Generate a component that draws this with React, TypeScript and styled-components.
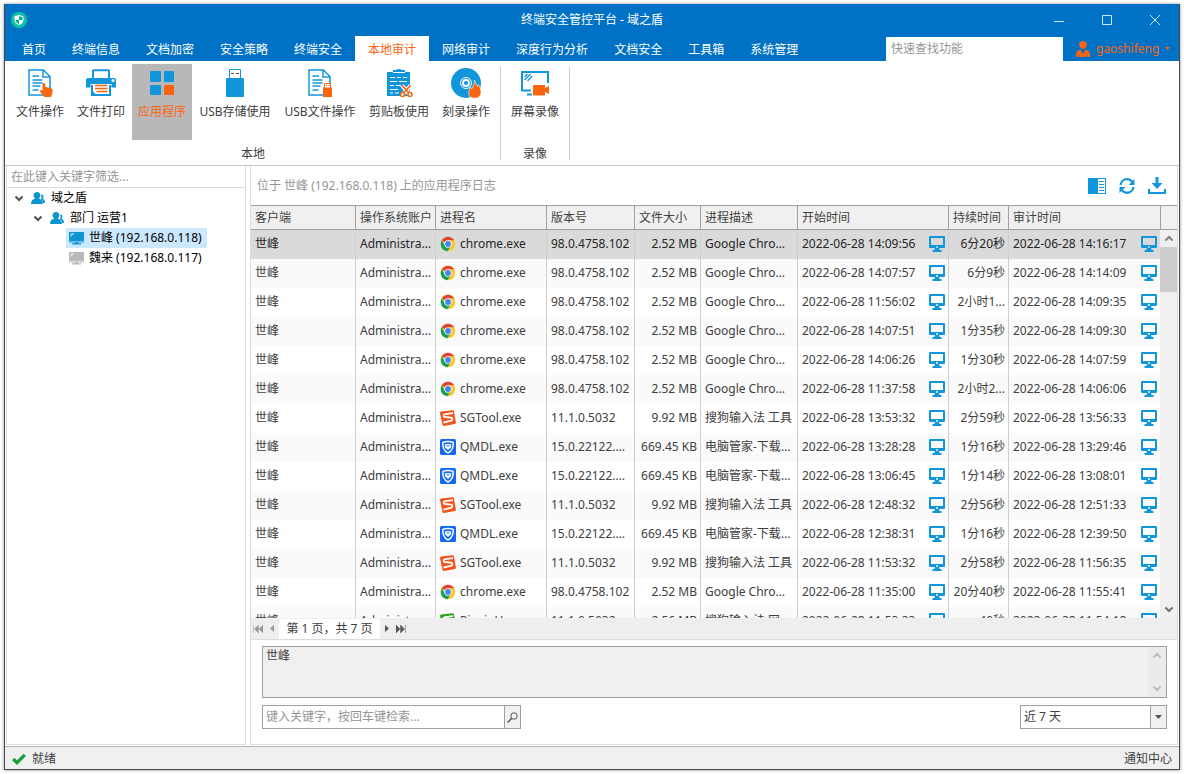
import React from "react";
import styled, { createGlobalStyle } from "styled-components";

const c = {
  brand: "#0072c6",
  icon: "#1296db",
  accent: "#f9650f",
  text: "#404040",
  line: "#a0a0a0",
  soft: "#dcdcdc",
  panel: "#f0f0f0",
};

const GlobalStyle = createGlobalStyle`
  * { box-sizing: border-box; }
  body { margin: 0; background: #fff; }
  body, button, input, textarea, select {
    font: 12px/16px "Noto Sans", "Noto Sans CJK SC", sans-serif;
    color: ${c.text};
  }
  button { border: 0; background: none; padding: 0; }
  svg { display: block; flex: none; }
`;

const Frame = styled.div`
  height: 100vh;
  padding: 4px;
`;
const Window = styled.div`
  height: 100%;
  display: flex;
  flex-direction: column;
  border: solid #4a4a4a;
  border-width: 0 1px 1px;
  box-shadow: 0 0 3px rgba(0, 0, 0, 0.45);
  background: #fff;
`;
const TitleBar = styled.header`
  display: grid;
  grid-template-columns: 1fr auto 1fr;
  align-items: center;
  height: 32px;
  flex: none;
  background: ${c.brand};
  color: #fff;
`;
const AppLogo = styled.div`
  padding-left: 6px;
`;
const Title = styled.h1`
  margin: 0;
  font-size: 12px;
  font-weight: 400;
`;
const WindowButtons = styled.div`
  display: flex;
  justify-content: flex-end;
`;
const WindowButton = styled.button`
  width: 48px;
  height: 32px;
  display: grid;
  place-items: center;
`;
const TabBar = styled.nav`
  display: flex;
  height: 25px;
  flex: none;
  padding-left: 4px;
  background: ${c.brand};
`;
const Tab = styled.button<{ $active?: boolean }>`
  padding: 2px 13px 0;
  white-space: nowrap;
  color: ${(p) => (p.$active ? c.accent : "#fff")};
  background: ${(p) => (p.$active ? "#fff" : "transparent")};
`;
const QuickSearch = styled.input`
  width: 177px;
  margin: 1px 0 0 auto;
  padding: 0 5px;
  border: 0;
  &::placeholder { color: #969696; opacity: 1; }
`;
const UserButton = styled.button`
  display: flex;
  align-items: center;
  gap: 6px;
  width: 116px;
  padding-left: 13px;
  color: ${c.accent};
`;
const Ribbon = styled.div`
  display: flex;
  flex: none;
  height: 105px;
  padding: 3px 0 5px;
  border-bottom: 1px solid #c6c6c6;
`;
const Group = styled.section`
  display: flex;
  flex-direction: column;
  align-items: center;
  gap: 6px;
  padding: 0 5px 0 4px;
  position: relative;
  &::after {
    content: "";
    position: absolute;
    right: 0;
    top: 3px;
    bottom: 0;
    width: 1px;
    background: #cfcfcf;
  }
  &:first-child { padding-left: 5px; }
`;
const GroupItems = styled.div`
  display: flex;
  gap: 1px;
`;
const RibbonButton = styled.button<{ $active?: boolean; $wide?: boolean }>`
  display: flex;
  flex-direction: column;
  align-items: center;
  gap: 6px;
  height: 76px;
  min-width: ${(p) => (p.$wide ? 84 : 60)}px;
  padding: 4px 6px;
  white-space: nowrap;
  color: ${(p) => (p.$active ? c.accent : c.text)};
  background: ${(p) => (p.$active ? "#b8b8b8" : "transparent")};
`;
const Body = styled.div`
  flex: 1;
  min-height: 0;
  display: flex;
  gap: 4px;
  padding: 0 1px 1px;
`;
const Sidebar = styled.aside`
  width: 240px;
  flex: none;
  border: solid ${c.soft};
  border-width: 0 1px 1px;
`;
const TreeFilter = styled.input`
  display: block;
  width: 100%;
  height: 22px;
  padding: 0 4px;
  border: 0;
  border-bottom: 1px solid ${c.soft};
  &::placeholder { color: #969696; opacity: 1; }
`;
const Tree = styled.ul`
  margin: 0;
  padding: 0;
  list-style: none;
`;
const TreeRow = styled.li<{ $level: number }>`
  display: flex;
  align-items: center;
  height: 20px;
  padding-left: ${(p) => 7 + p.$level * 19}px;
  color: #000;
`;
const TreeLabel = styled.span<{ $selected?: boolean }>`
  display: flex;
  align-items: center;
  gap: 5px;
  height: 20px;
  padding: 0 5px 0 3px;
  background: ${(p) => (p.$selected ? "#cce8ff" : "transparent")};
`;
const Toggle = styled.button`
  width: 10px;
  margin-right: 4px;
`;
const Main = styled.main`
  flex: 1;
  min-width: 0;
  display: flex;
  flex-direction: column;
  border: solid ${c.soft};
  border-width: 0 1px 1px;
`;
const MainHead = styled.div`
  display: flex;
  align-items: center;
  justify-content: space-between;
  height: 39px;
  flex: none;
  padding: 0 10px 0 6px;
  color: #969696;
`;
const Actions = styled.div`
  display: flex;
  gap: 10px;
`;
const IconButton = styled.button`
  width: 20px;
  height: 20px;
  display: grid;
  place-items: center;
`;
const Grid = styled.div`
  flex: 1;
  min-height: 0;
  display: flex;
  overflow: hidden;
`;
const TableClip = styled.div`
  flex: 1;
  min-width: 0;
  overflow: hidden;
`;
const Table = styled.table`
  width: 100%;
  table-layout: fixed;
  border-collapse: separate;
  border-spacing: 0;
`;
const Col = styled.col<{ $w?: number }>`
  width: ${(p) => (p.$w ? p.$w + "px" : "auto")};
`;
const Th = styled.th`
  height: 25px;
  padding: 0 3px 0 4px;
  text-align: left;
  font-weight: 400;
  white-space: nowrap;
  background: ${c.panel};
  border: solid ${c.line};
  border-width: 1px 1px 1px 0;
  &:last-child { border-right: 0; }
`;
const Tr = styled.tr<{ $selected?: boolean }>`
  color: ${(p) => (p.$selected ? "#262626" : c.text)};
  background: ${(p) => (p.$selected ? "#dadada" : "#fff")};
  &:nth-child(even) { background: #fafafa; }
`;
const Td = styled.td<{ $right?: boolean }>`
  height: 29px;
  padding: 0 3px 1px 4px;
  border-right: 1px solid #cfcfcf;
  white-space: nowrap;
  overflow: hidden;
  text-overflow: ellipsis;
  text-align: ${(p) => (p.$right ? "right" : "left")};
  &:last-child { border-right: 0; }
`;
const Cell = styled.div<{ $spread?: boolean }>`
  display: flex;
  align-items: center;
  gap: 4px;
  justify-content: ${(p) => (p.$spread ? "space-between" : "flex-start")};
`;
const Scroll = styled.div`
  width: 17px;
  flex: none;
  display: flex;
  flex-direction: column;
  background: #f0f0f0;
`;
const ScrollCap = styled.div`
  height: 25px;
  border: solid ${c.line};
  border-width: 1px 0 1px 1px;
  background: ${c.panel};
`;
const ScrollArrow = styled.button`
  height: 17px;
  display: grid;
  place-items: center;
`;
const Thumb = styled.div`
  height: 45px;
  margin-bottom: auto;
  background: #cdcdcd;
`;
const Pager = styled.div`
  display: flex;
  align-items: center;
  height: 22px;
  flex: none;
  background: #eeeeee;
  border-bottom: 1px solid ${c.soft};
`;
const PagerButton = styled.button`
  height: 20px;
  width: 14px;
  display: grid;
  place-items: center;
`;
const PageText = styled.span`
  width: 101px;
  height: 20px;
  line-height: 20px;
  text-align: center;
  background: #fff;
`;
const Detail = styled.div`
  display: flex;
  flex-direction: column;
  flex: none;
  gap: 7px;
  padding: 6px 10px 15px 11px;
`;
const DetailBox = styled.div`
  display: flex;
  height: 52px;
  border: 1px solid ${c.line};
  background: ${c.panel};
`;
const DetailText = styled.textarea`
  flex: 1;
  border: 0;
  padding: 1px 3px;
  resize: none;
  background: transparent;
  overflow: hidden;
`;
const DetailScroll = styled.div`
  width: 18px;
  display: flex;
  flex-direction: column;
  justify-content: space-between;
  background: #ebebeb;
`;
const DetailFoot = styled.div`
  display: flex;
  justify-content: space-between;
`;
const Field = styled.div<{ $w: number }>`
  display: flex;
  position: relative;
  width: ${(p) => p.$w}px;
  height: 24px;
  border: 1px solid ${c.line};
`;
const FieldInput = styled.input`
  flex: 1;
  min-width: 0;
  border: 0;
  padding: 0 3px;
  &::placeholder { color: #969696; opacity: 1; }
`;
const FieldButton = styled.button`
  width: 16px;
  display: grid;
  place-items: center;
  background: ${c.panel};
  border-left: 1px solid ${c.line};
`;
const RangeSelect = styled.select`
  flex: 1;
  appearance: none;
  border: 0;
  padding: 0 3px;
  background: #fff;
`;
const SelectArrow = styled.span`
  position: absolute;
  right: 0;
  top: 0;
  bottom: 0;
  width: 16px;
  display: grid;
  place-items: center;
  pointer-events: none;
  background: ${c.panel};
  border-left: 1px solid ${c.line};
`;
const StatusBar = styled.footer`
  display: flex;
  align-items: center;
  justify-content: space-between;
  height: 23px;
  flex: none;
  padding: 1px 7px 0;
  background: ${c.panel};
  border-top: 1px solid #b4b4b4;
`;
const Status = styled.span`
  display: flex;
  align-items: center;
  gap: 6px;
`;

const Logo = () => (
  <svg width="16" height="16" viewBox="0 0 16 16">
    <circle cx="8" cy="8" r="8" fill="#08c5a3" />
    <path d="M8 3 12.500 4.300V8c0 2.600-2.300 4.300-4.500 5.200C5.800 12.300 3.500 10.600 3.500 8V4.300z" fill="#fff" />
    <path d="M8 4.200V8h3.500V5zM4.500 8H8v4.200C6.200 11.300 4.500 10 4.500 8z" fill="#08b394" />
  </svg>
);
const UserIcon = () => (
  <svg width="14" height="16" viewBox="0 0 14 16" fill={c.accent}>
    <path d="M3.200 3.500C3.200 1.200 5 0 7 0s3.800 1.200 3.800 3.500C10.800 6 9 8 7 8S3.200 6 3.200 3.500z" />
    <path d="M4.500 8.600 6.500 13 7 10l.5 3 2-4.400C12.500 9.500 14 11 14 13.500V16H11.500v-2.500h-.7V16H3.200v-2.500h-.7V16H0v-2.500C0 11 1.500 9.500 4.500 8.600z" />
  </svg>
);
const People = () => (
  <svg width="15" height="14" viewBox="0 0 15 14" fill="#0e95cf">
    <path d="M10 3.500c1.500-.3 2.500.6 2.500 2 0 .9-.4 1.500-1 2 1.500.6 2.500 2 2.500 4.500h-1.800c-.2-1.800-1-3-2.300-3.800C10.800 6.800 10.800 5 10 3.500z" />
    <path d="M6 1c2 0 3.400 1.300 3.400 3.300 0 1.400-.7 2.500-1.500 3.200 2.300.6 4 2.200 4.100 5.500H0c.1-3.300 1.800-4.900 4.100-5.500C3.300 6.800 2.600 5.700 2.600 4.300 2.600 2.300 4 1 6 1z" />
  </svg>
);
const Computer = ({ color }: { color: string }) => (
  <svg width="15" height="13" viewBox="0 0 15 13">
    <path d="M0 0h15v9H0z" fill={color} />
    <path d="M1.500 4.500 5 1.200M1.500 2.800 3 1.300" stroke="#fff" strokeWidth=".9" />
    <path d="M0 9.500h15v1H9v.8h3v1.200H3v-1.200h3v-.8H0z" fill={color} />
  </svg>
);
const Screen = () => (
  <svg width="16" height="16" viewBox="0 0 16 16" fill={c.icon}>
    <path fillRule="evenodd" d="M1 0h14a1 1 0 0 1 1 1v10a1 1 0 0 1-1 1h-4.500c-.5 0-.5 2 .5 2h1.500v2h-9v-2H5c1 0 1-2 .5-2H1a1 1 0 0 1-1-1V1a1 1 0 0 1 1-1zm1 2v7h12V2zm5 8.300v1.400h2v-1.400z" />
  </svg>
);
const Chrome = () => (
  <svg width="16" height="16" viewBox="0 0 16 16">
    <circle cx="8" cy="8" r="7.300" fill="#fbc92f" />
    <path d="M8 8 1.700 4.350A7.300 7.300 0 0 1 14.320 4.350H8z" fill="#e04434" />
    <path d="M1.700 4.350A7.300 7.300 0 0 0 7.400 15.280L11.160 9.800 8 8 4.850 9.800z" fill="#15a15b" />
    <circle cx="8" cy="8" r="3.650" fill="#fff" />
    <circle cx="8" cy="8" r="2.900" fill="#4285f4" />
  </svg>
);
const Sogou = ({ color = "#f5511e" }: { color?: string }) => (
  <svg width="16" height="16" viewBox="0 0 16 16">
    <path d="M0 3Q0 1.800 1.200 1.500L12.500.2Q13.700 0 13.900 1.200L15.900 12.500Q16 13.600 14.900 13.900L4 15.900Q2.800 16 2.500 14.900z" fill={color} />
    <path d="M13 3.200 5.200 4.200C3.200 4.500 3 6.600 4.800 7L11 7.700c2 .3 1.800 2.700-.2 3.100L3.500 12.500" fill="none" stroke="#fff" strokeWidth="1.800" />
  </svg>
);
const Shield = () => (
  <svg width="16" height="16" viewBox="0 0 16 16">
    <rect width="16" height="16" rx="1.500" fill="#1268fb" />
    <path d="M2.800 3.400Q8 1.500 13.200 3.400C13.500 8.500 12 12 8 14 4 12 2.500 8.500 2.800 3.400z" fill="none" stroke="#fff" strokeWidth="1.500" />
    <path d="M4.800 5h6.400L11 8.200l-3 2.800-3-2.800z" fill="#fff" />
    <path d="M6 5.500 8 7.500l2-2" stroke="#1268fb" fill="none" />
  </svg>
);
const Chevron = ({ up, color = "#505050" }: { up?: boolean; color?: string }) => (
  <svg width="10" height="7" viewBox="0 0 10 7">
    <path d={up ? "M1.500 5.500 5 2 8.500 5.500" : "M1.500 1.500 5 5 8.500 1.500"} fill="none" stroke={color} strokeWidth="2" />
  </svg>
);
const Doc = () => (
  <>
    <path d="M4 2h14.500L25 8.500V27H4z" fill="#fff" stroke={c.icon} strokeWidth="1.500" />
    <path d="M18 2v7h7" fill="none" stroke={c.icon} strokeWidth="1.500" />
    <path d="M7.500 8H14M7.500 12h10M7.500 15h10M7.500 18h8M7.500 22h6" stroke={c.icon} strokeWidth="1.500" />
  </>
);

const ribbonIcons: Record<string, React.ReactNode> = {
  file: (
    <>
      <Doc />
      <path d="M17.500 16.500c0-2 2.800-2 2.800 0v2.800c1-.5 2-.3 2.400.4 1-.5 2-.1 2.200.6 1-.4 2.600 0 2.600 1.500 0 2.500 0 4.500-1.500 7.200h-6.500c-1.500-2-3.500-3.500-4.500-5.500-.5-1.500 1.200-2 2.500-.8z" fill={c.accent} />
    </>
  ),
  print: (
    <>
      <path d="M7 10V3q0-.8.8-.8h14.400q.8 0 .8.8v7" fill="none" stroke={c.icon} strokeWidth="2" />
      <path d="M2 10h26q2 0 2 2v7.500h-4.500V16h-21v3.500H0V12q0-2 2-2z" fill={c.icon} />
      <circle cx="27" cy="12.500" r="1.500" fill="#fff" />
      <path d="M6 17v10h18V17" fill="#fff" stroke={c.icon} strokeWidth="2" />
      <path d="M6 22v6h5z" fill={c.icon} />
      <path d="M9 17.500h12.500M9 20.500h12.500M10.500 23.500h11" stroke={c.accent} strokeWidth="1.500" />
    </>
  ),
  apps: (
    <>
      <rect x="3" y="3" width="11" height="11" rx="1" fill={c.icon} />
      <rect x="17" y="3" width="10" height="11" rx="1" fill={c.icon} />
      <rect x="3" y="17" width="11" height="10" rx="1" fill={c.icon} />
      <rect x="17" y="17" width="10" height="10" rx="1" fill={c.accent} />
    </>
  ),
  usb: (
    <>
      <path d="M9.500 11V1.500h11V11" fill="#fff" stroke={c.icon} />
      <path d="M11 5.500h3M16 5.500h3" stroke="#555" />
      <rect x="6" y="10" width="18" height="19" rx="1" fill={c.icon} />
    </>
  ),
  usbfile: (
    <>
      <Doc />
      <path d="M19.500 20v-4.500h6V20" fill="#fff" stroke={c.accent} />
      <path d="M21 17.500h1M23.500 17.500h1" stroke={c.accent} />
      <rect x="18" y="19.500" width="9" height="9.500" fill={c.accent} />
    </>
  ),
  clipboard: (
    <>
      <path d="M3 4h6V2h3q3-2 6 0h3v2h5v24H3z" fill={c.icon} />
      <path d="M9 4.500h12" stroke="#fff" />
      <path d="M6 9.500h5M13 9.500h4M19 9.500h4M6 13.500h7M15 13.500h8M6 17.500h4M12 17.500h5M6 21.500h8M6 25h3M11 25h4" stroke="#fff" strokeWidth="1.200" />
      <path d="M18 17.500 26 27M26.500 17.500 18.500 27" stroke="#fff" strokeWidth="4" />
      <path d="M18 17.500 25 25M26.500 17.500 19.500 25" stroke={c.accent} strokeWidth="1.800" />
      <g fill="#fff" stroke={c.accent} strokeWidth="1.500">
        <circle cx="18.500" cy="26.500" r="2" />
        <circle cx="26" cy="26.500" r="2" />
      </g>
    </>
  ),
  disc: (
    <>
      <circle cx="15" cy="15" r="15" fill={c.icon} />
      <circle cx="15" cy="15" r="5.500" fill="none" stroke="#fff" />
      <circle cx="15" cy="15" r="3" fill={c.icon} stroke="#fff" strokeWidth="1.800" />
      <path d="M23.500 12c1 3 2 4 3 6.500l1-2c1.800 3 2.500 5.500 2.500 8 0 2.500-1.500 4.500-3.500 5.500h-5.500c-2.500-1-3.500-3-3.300-5.500.2-1.800 1-3.200 1.500-5.500l1.500 2c1-2.500 3-5 2.800-9z" fill={c.accent} stroke="#fff" strokeWidth=".6" />
    </>
  ),
  record: (
    <>
      <path d="M11 22.500H2V4h26v11" fill="none" stroke={c.icon} strokeWidth="2" />
      <path d="M4.500 12 10.500 6M4.500 9 7.500 6M7.500 13 12 8" stroke={c.icon} strokeWidth="1.300" />
      <path d="M7 26.500h5" stroke={c.icon} strokeWidth="2" />
      <path d="M14 17h11v3l4-2v8l-4-2v3.500H13V18z" fill={c.accent} />
    </>
  ),
};

const tabs = ["首页", "终端信息", "文档加密", "安全策略", "终端安全", "本地审计", "网络审计", "深度行为分析", "文档安全", "工具箱", "系统管理"];
const groups = [
  {
    name: "本地",
    items: [
      ["文件操作", "file"], ["文件打印", "print"], ["应用程序", "apps"], ["USB存储使用", "usb"],
      ["USB文件操作", "usbfile"], ["剪贴板使用", "clipboard"], ["刻录操作", "disc"],
    ],
  },
  { name: "录像", items: [["屏幕录像", "record"]] },
];
const programs: Record<string, [string, string, string, string, React.ReactNode]> = {
  chrome: ["chrome.exe", "98.0.4758.102", "2.52 MB", "Google Chrome Browser", <Chrome />],
  sg: ["SGTool.exe", "11.1.0.5032", "9.92 MB", "搜狗输入法 工具", <Sogou />],
  qm: ["QMDL.exe", "15.0.22122.201", "669.45 KB", "电脑管家-下载组件", <Shield />],
  pinyin: ["PinyinUp.exe", "11.1.0.5032", "2.56 MB", "搜狗输入法 网络更新", <Sogou color="#2ba51c" />],
};
const rows = [
  ["chrome", "14:09:56", "6分20秒", "14:16:17"],
  ["chrome", "14:07:57", "6分9秒", "14:14:09"],
  ["chrome", "11:56:02", "2小时1...", "14:09:35"],
  ["chrome", "14:07:51", "1分35秒", "14:09:30"],
  ["chrome", "14:06:26", "1分30秒", "14:07:59"],
  ["chrome", "11:37:58", "2小时2...", "14:06:06"],
  ["sg", "13:53:32", "2分59秒", "13:56:33"],
  ["qm", "13:28:28", "1分16秒", "13:29:46"],
  ["qm", "13:06:45", "1分14秒", "13:08:01"],
  ["sg", "12:48:32", "2分56秒", "12:51:33"],
  ["qm", "12:38:31", "1分16秒", "12:39:50"],
  ["sg", "11:53:32", "2分58秒", "11:56:35"],
  ["chrome", "11:35:00", "20分40秒", "11:55:41"],
  ["pinyin", "11:53:33", "40秒", "11:54:18"],
];
const headers = ["客户端", "操作系统账户", "进程名", "版本号", "文件大小", "进程描述", "开始时间", "持续时间", "审计时间"];
const widths = [0, 80, 111, 88, 66, 97, 151, 60, 151];

const Stamp = ({ time }: { time: string }) => (
  <Cell $spread>
    <span>2022-06-28 {time}</span>
    <Screen />
  </Cell>
);

export default function App() {
  return (
    <Frame>
      <GlobalStyle />
      <Window>
        <TitleBar>
          <AppLogo><Logo /></AppLogo>
          <Title>终端安全管控平台 - 域之盾</Title>
          <WindowButtons>
            <WindowButton aria-label="最小化">
              <svg width="10" height="10"><path d="M0 6.500h10" stroke="#d5e6f3" /></svg>
            </WindowButton>
            <WindowButton aria-label="最大化">
              <svg width="10" height="10"><path d="M.5.5h9v9h-9z" fill="none" stroke="#d5e6f3" /></svg>
            </WindowButton>
            <WindowButton aria-label="关闭">
              <svg width="10" height="10"><path d="M0 0 10 10M10 0 0 10" stroke="#d5e6f3" /></svg>
            </WindowButton>
          </WindowButtons>
        </TitleBar>
        <TabBar>
          {tabs.map((t) => <Tab key={t} $active={t === "本地审计"}>{t}</Tab>)}
          <QuickSearch placeholder="快速查找功能" aria-label="快速查找功能" />
          <UserButton>
            <UserIcon />
            gaoshifeng
            <svg width="5" height="3"><path d="M0 0h5L2.500 3z" fill={c.accent} /></svg>
          </UserButton>
        </TabBar>
        <Ribbon>
          {groups.map((g) => (
            <Group key={g.name}>
              <GroupItems>
                {g.items.map(([label, icon]) => (
                  <RibbonButton key={label} $active={icon === "apps"} $wide={label.startsWith("USB")}>
                    <svg width="30" height="30" viewBox="0 0 30 30">{ribbonIcons[icon]}</svg>
                    {label}
                  </RibbonButton>
                ))}
              </GroupItems>
              {g.name}
            </Group>
          ))}
        </Ribbon>
        <Body>
          <Sidebar>
            <TreeFilter placeholder="在此键入关键字筛选..." aria-label="筛选" />
            <Tree>
              <TreeRow $level={0}>
                <Toggle aria-label="折叠"><Chevron /></Toggle>
                <TreeLabel><People />域之盾</TreeLabel>
              </TreeRow>
              <TreeRow $level={1}>
                <Toggle aria-label="折叠"><Chevron /></Toggle>
                <TreeLabel><People />部门 运营1</TreeLabel>
              </TreeRow>
              <TreeRow $level={2}>
                <Toggle as="span" />
                <TreeLabel $selected><Computer color="#0e95cf" />世峰 (192.168.0.118)</TreeLabel>
              </TreeRow>
              <TreeRow $level={2}>
                <Toggle as="span" />
                <TreeLabel><Computer color="#b9b9b9" />魏来 (192.168.0.117)</TreeLabel>
              </TreeRow>
            </Tree>
          </Sidebar>
          <Main>
            <MainHead>
              位于 世峰 (192.168.0.118) 上的应用程序日志
              <Actions>
                <IconButton aria-label="列">
                  <svg width="18" height="16"><path d="M0 0h18v16H0z" fill={c.icon} /><path d="M10 1h7v14h-7z" fill="#fff" /><path d="M11 3.500h5M11 6.500h5M11 9.500h5M11 12.500h5" stroke={c.icon} /></svg>
                </IconButton>
                <IconButton aria-label="刷新">
                  <svg width="16" height="16" viewBox="0 0 16 16"><path d="M1.500 7C2 3.500 5 1.200 8 1.200c2.300 0 4 1 5.200 2.600M14.500 9c-.5 3.500-3.500 5.800-6.500 5.800-2.300 0-4-1-5.200-2.600" fill="none" stroke={c.icon} strokeWidth="2.200" /><path d="M15.500 1v6h-6zM.5 15V9h6z" fill={c.icon} /></svg>
                </IconButton>
                <IconButton aria-label="下载">
                  <svg width="18" height="17" viewBox="0 0 18 17"><path d="M7.500 0h3v6h4L9 12 3.500 6h4z" fill={c.icon} /><path d="M1 12v4h16v-4" fill="none" stroke={c.icon} strokeWidth="2" /></svg>
                </IconButton>
              </Actions>
            </MainHead>
            <Grid>
              <TableClip>
                <Table>
                  <colgroup>{widths.map((w, i) => <Col key={i} $w={w} />)}</colgroup>
                  <thead><tr>{headers.map((h) => <Th key={h}>{h}</Th>)}</tr></thead>
                  <tbody>
                    {rows.map(([key, start, span, audit], i) => {
                      const [exe, version, size, about, icon] = programs[key];
                      return (
                        <Tr key={i} $selected={i === 0}>
                          <Td>世峰</Td>
                          <Td>Administrator</Td>
                          <Td><Cell>{icon}{exe}</Cell></Td>
                          <Td>{version}</Td>
                          <Td $right>{size}</Td>
                          <Td>{about}</Td>
                          <Td><Stamp time={start} /></Td>
                          <Td $right>{span}</Td>
                          <Td><Stamp time={audit} /></Td>
                        </Tr>
                      );
                    })}
                  </tbody>
                </Table>
              </TableClip>
              <Scroll>
                <ScrollCap />
                <ScrollArrow aria-label="向上滚动"><Chevron up color="#808080" /></ScrollArrow>
                <Thumb />
                <ScrollArrow aria-label="向下滚动"><Chevron color="#707070" /></ScrollArrow>
              </Scroll>
            </Grid>
            <Pager>
              <PagerButton aria-label="首页"><svg width="10" height="8"><path d="M.5 0v8M5.500 0v8L1.500 4zM10 0v8L6 4z" fill="#999" stroke="#999" strokeWidth=".5" /></svg></PagerButton>
              <PagerButton aria-label="上一页"><svg width="4" height="7"><path d="M4 0v7L0 3.500z" fill="#999" /></svg></PagerButton>
              <PageText>第 1 页，共 7 页</PageText>
              <PagerButton aria-label="下一页"><svg width="4" height="7"><path d="M0 0v7l4-3.500z" fill="#555" /></svg></PagerButton>
              <PagerButton aria-label="末页"><svg width="10" height="8"><path d="M9.500 0v8M0 0v8l4-4zM4.500 0v8l4-4z" fill="#555" stroke="#555" strokeWidth=".5" /></svg></PagerButton>
            </Pager>
            <Detail>
              <DetailBox>
                <DetailText readOnly defaultValue="世峰" aria-label="详细信息" />
                <DetailScroll>
                  <ScrollArrow aria-label="向上滚动"><Chevron up color="#bdbdbd" /></ScrollArrow>
                  <ScrollArrow aria-label="向下滚动"><Chevron color="#bdbdbd" /></ScrollArrow>
                </DetailScroll>
              </DetailBox>
              <DetailFoot>
                <Field $w={259}>
                  <FieldInput placeholder="键入关键字，按回车键检索..." aria-label="检索" />
                  <FieldButton aria-label="检索"><svg width="11" height="11" viewBox="0 0 11 11"><circle cx="7" cy="4" r="3.200" fill="none" stroke="#555" /><path d="M4.700 6.300.5 10.500" stroke="#555" strokeWidth="1.500" /></svg></FieldButton>
                </Field>
                <Field $w={147}>
                  <RangeSelect aria-label="时间范围" defaultValue="7"><option value="7">近 7 天</option></RangeSelect>
                  <SelectArrow><svg width="7" height="4"><path d="M0 0h7L3.500 4z" fill="#555" /></svg></SelectArrow>
                </Field>
              </DetailFoot>
            </Detail>
          </Main>
        </Body>
        <StatusBar>
          <Status>
            <svg width="14" height="12" viewBox="0 0 14 12"><path d="M1.200 6 5 9.700 12.800 1.800" fill="none" stroke="#12a037" strokeWidth="3.200" /></svg>
            就绪
          </Status>
          <span>通知中心</span>
        </StatusBar>
      </Window>
    </Frame>
  );
}
